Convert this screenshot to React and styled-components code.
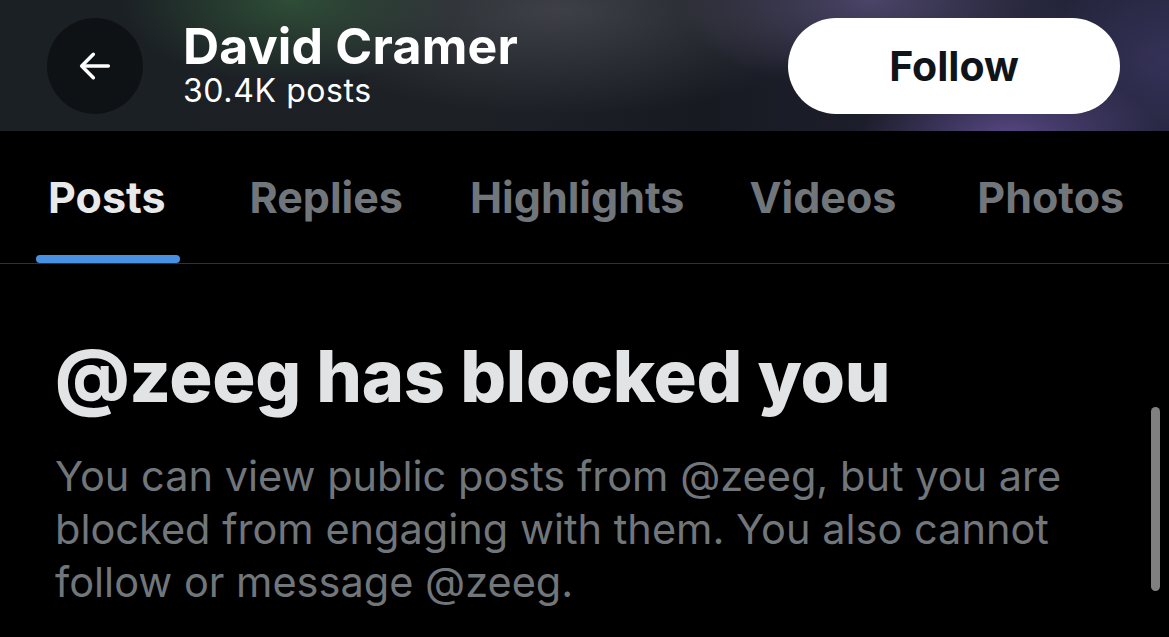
import React from "react";
import styled, { createGlobalStyle } from "styled-components";

const Global = createGlobalStyle`
  html, body { margin: 0; padding: 0; background: #000; }
  body { font-family: Inter, "Noto Sans", Roboto, sans-serif; -webkit-font-smoothing: antialiased; }
`;

const Page = styled.div`
  width: 1169px;
  height: 637px;
  background: #000;
  overflow: hidden;
  position: relative;
  display: flex;
  flex-direction: column;
`;

const Header = styled.header`
  height: 131px;
  flex: none;
  display: flex;
  align-items: center;
  padding: 0 49px 0 47px;
  background:
    radial-gradient(ellipse 240px 120px at 290px 0px, rgba(52, 92, 60, 0.75), transparent 70%),
    radial-gradient(ellipse 380px 140px at 560px 10px, rgba(90, 92, 98, 0.55), transparent 75%),
    radial-gradient(ellipse 260px 120px at 870px 0px, rgba(95, 85, 130, 0.7), transparent 75%),
    radial-gradient(ellipse 200px 90px at 1010px 135px, rgba(100, 80, 150, 0.8), transparent 75%),
    radial-gradient(ellipse 220px 140px at 1169px 60px, rgba(60, 55, 100, 0.7), transparent 75%),
    linear-gradient(90deg, #1b2024 0%, #1d2126 40%, #181a22 60%, #23243a 100%);
`;

const BackButton = styled.div`
  width: 96px;
  height: 96px;
  border-radius: 50%;
  background: #0f1215;
  display: flex;
  align-items: center;
  justify-content: center;
  flex: none;
`;

const NameBlock = styled.div`
  display: flex;
  flex-direction: column;
  margin-left: 40px;
  margin-top: -2px;
`;

const Name = styled.div`
  color: #fff;
  font-weight: 700;
  font-size: 50px;
  line-height: 50px;
  letter-spacing: 0.2px;
`;

const PostCount = styled.div`
  color: #fff;
  font-weight: 400;
  font-size: 32px;
  line-height: 36px;
  letter-spacing: 0.6px;
  margin-top: 2px;
`;

const FollowButton = styled.button`
  margin-left: auto;
  width: 332px;
  height: 96px;
  border: none;
  border-radius: 48px;
  background: #fff;
  color: #0f1419;
  font-family: inherit;
  font-weight: 700;
  font-size: 41px;
  display: flex;
  align-items: center;
  justify-content: center;
  padding: 0;
  margin-top: 1px;
`;

const Tabs = styled.nav`
  height: 132px;
  flex: none;
  display: flex;
  padding: 0 0 0 36px;
  border-bottom: 1px solid #2f3336;
`;

const Tab = styled.div`
  position: relative;
  display: flex;
  align-items: center;
  margin-left: ${(p) => p.$ml || 0}px;
  padding: 0 ${(p) => p.$pr || 12}px 0 12px;
  font-weight: 700;
  font-size: 43px;
  color: ${(p) => (p.$active ? "#e7e9ea" : "#71767b")};
`;

const Indicator = styled.span`
  position: absolute;
  left: 0;
  right: 0;
  bottom: 0;
  height: 8px;
  border-radius: 4px;
  background: #4a90e2;
`;

const Content = styled.section`
  padding: 72px 60px 0 55px;
  display: flex;
  flex-direction: column;
`;

const Heading = styled.h1`
  margin: 0;
  color: #e2e3e4;
  font-weight: 800;
  font-size: 72px;
  line-height: 80px;
  letter-spacing: -0.3px;
`;

const Body = styled.p`
  margin: 34px 0 0;
  color: #71767b;
  font-weight: 400;
  font-size: 41.5px;
  line-height: 53px;
`;

const Scrollbar = styled.div`
  position: absolute;
  right: 9px;
  top: 407px;
  width: 9px;
  height: 184px;
  border-radius: 5px;
  background: #808080;
`;

const tabs = [
  { label: "Posts", ml: 0 },
  { label: "Replies", ml: 57 },
  { label: "Highlights", ml: 43 },
  { label: "Videos", ml: 41 },
  { label: "Photos", ml: 57 },
];

export default function App() {
  return (
    <Page>
      <Global />
      <Header>
        <BackButton>
          <svg width="40" height="40" viewBox="0 0 24 24" fill="none" stroke="#fff" strokeWidth="2.1" strokeLinecap="round" strokeLinejoin="round">
            <path d="M20 12H4.5" />
            <path d="M11 5l-7 7 7 7" />
          </svg>
        </BackButton>
        <NameBlock>
          <Name>David Cramer</Name>
          <PostCount>30.4K posts</PostCount>
        </NameBlock>
        <FollowButton>Follow</FollowButton>
      </Header>
      <Tabs>
        {tabs.map((t, i) => (
          <Tab key={t.label} $active={i === 0} $ml={t.ml} $pr={i === 0 ? 15 : 12}>
            {t.label}
            {i === 0 && <Indicator />}
          </Tab>
        ))}
      </Tabs>
      <Content>
        <Heading>@zeeg has blocked you</Heading>
        <Body>
          You can view public posts from @zeeg, but you are blocked from engaging with them. You also cannot follow or message @zeeg.
        </Body>
      </Content>
      <Scrollbar />
    </Page>
  );
}
